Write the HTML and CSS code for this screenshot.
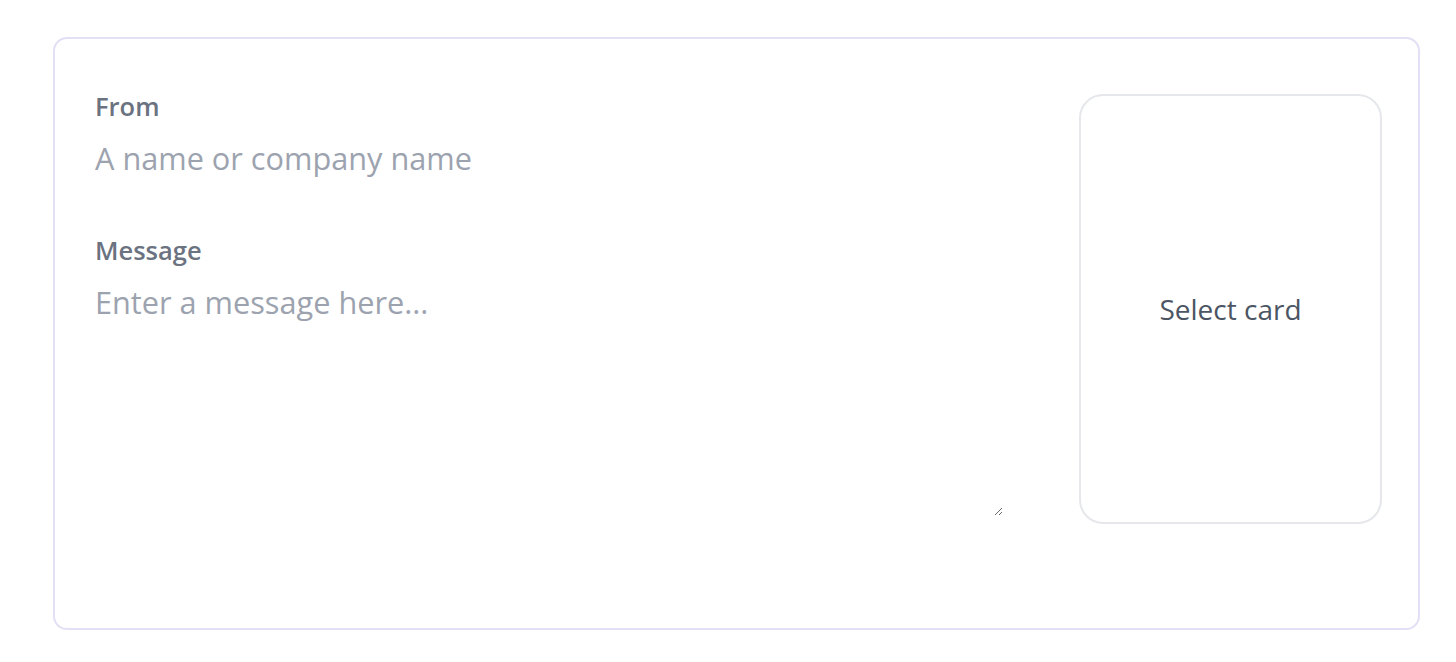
FILE: index.html
```html
<!DOCTYPE html>
<html>
<head>
<meta charset="utf-8">
<link rel="stylesheet" href="styles.css">
</head>
<body>
<div class="page">
  <div class="panel">
    <div class="form">
      <div class="field">
        <label class="label">From</label>
        <input class="input" type="text" placeholder="A name or company name">
      </div>
      <div class="field">
        <label class="label">Message</label>
        <textarea class="textarea" placeholder="Enter a message here..."></textarea>
      </div>
    </div>
    <div class="card">Select card</div>
  </div>
</div>
</body>
</html>
```
FILE: styles.css
```css
* { box-sizing: border-box; }
html, body { margin: 0; background: #fff; }
body { font-family: "Open Sans", "Inter", sans-serif; }
.page { padding: 37px 36px 32px 53px; }
.panel {
  display: flex;
  align-items: flex-start;
  border: 2px solid #e4dff5;
  border-radius: 14px;
  padding: 51px 36px 0 40px;
  gap: 76px;
  height: 593px;
}
.form { flex: 1; display: flex; flex-direction: column; }
.field { display: flex; flex-direction: column; }
.label {
  font-size: 25.5px;
  font-weight: 600;
  color: #6b7280;
  line-height: 32px;
  margin-bottom: 16px;
}
.input, .textarea {
  border: none;
  outline: none;
  padding: 0;
  font-family: inherit;
  font-size: 30.7px;
  line-height: 40px;
  color: #374151;
  background: transparent;
}
.input::placeholder, .textarea::placeholder { color: #9ca3af; }
.input { height: 40px; margin-bottom: 56px; }
.textarea { height: 234px; resize: vertical; }
.card {
  width: 303px;
  height: 430px;
  margin-top: 4px;
  border: 2px solid #e5e7eb;
  border-radius: 24px;
  display: flex;
  align-items: center;
  justify-content: center;
  font-size: 28px;
  color: #4b5563;
  flex-shrink: 0;
}
```
